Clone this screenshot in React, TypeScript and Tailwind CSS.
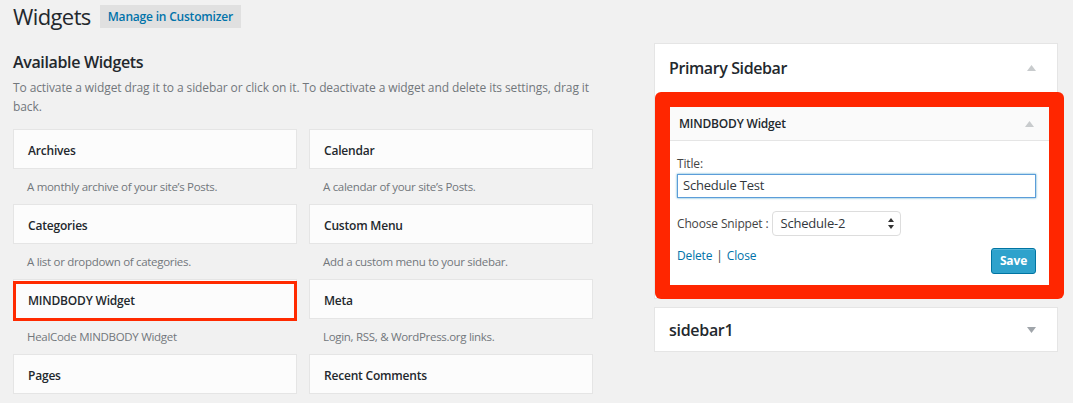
import React from "react";

const widgets = [
  { name: "Archives", desc: "A monthly archive of your site\u2019s Posts." },
  { name: "Calendar", desc: "A calendar of your site\u2019s Posts." },
  { name: "Categories", desc: "A list or dropdown of categories." },
  { name: "Custom Menu", desc: "Add a custom menu to your sidebar." },
  { name: "MINDBODY Widget", desc: "HealCode MINDBODY Widget", marked: true },
  { name: "Meta", desc: "Login, RSS, & WordPress.org links." },
  { name: "Pages", desc: "" },
  { name: "Recent Comments", desc: "" },
];

function Arrow({ down = false }: { down?: boolean }) {
  return (
    <svg width="9" height="6" viewBox="0 0 9 6" className="shrink-0">
      {down ? (
        <polygon points="0,0 9,0 4.5,6" fill="#a0a5aa" />
      ) : (
        <polygon points="0,6 9,6 4.5,0" fill="#c8cbcd" />
      )}
    </svg>
  );
}

function WidgetTile({ name, desc, marked }: { name: string; desc: string; marked?: boolean }) {
  return (
    <div className="h-[75px]">
      <div className="relative h-[40px] bg-[#fcfcfc] border border-[#e5e5e5] flex items-center px-[14px] pt-[3px]">
        <span className="text-[12px] tracking-[-0.2px] font-semibold text-[#23282d]">{name}</span>
        {marked && (
          <div className="absolute left-[-1px] right-[-1px] top-[1px] bottom-[-3px] border-[3px] border-[#ff2a00]" />
        )}
      </div>
      <p className="pl-[14px] pt-[9px] text-[11.5px] tracking-[-0.3px] text-[#72777c] leading-[18px]">{desc}</p>
    </div>
  );
}

export default function App() {
  return (
    <div
      className="w-[1073px] h-[403px] overflow-hidden bg-[#f1f1f1] pl-[13px]"
      style={{ fontFamily: '"Open Sans", "Liberation Sans", sans-serif' }}
    >
      <div className="flex items-center h-[32px] pt-[1px]">
        <h1 className="text-[22px] tracking-[-0.6px] text-[#23282d] leading-[29px] font-normal">Widgets</h1>
        <span className="ml-[9px] bg-[#e0e0e0] px-[8px] h-[23px] flex items-center text-[12px] tracking-[-0.2px] font-semibold text-[#0073aa]">
          Manage in Customizer
        </span>
      </div>

      <div className="flex">
        <div className="w-[580px]">
          <h2 className="mt-[19px] text-[16px] tracking-[-0.35px] font-semibold text-[#23282d] leading-[22px]">
            Available Widgets
          </h2>
          <p className="mt-[5px] text-[12px] tracking-[-0.1px] text-[#72777c] leading-[19px]">
            To activate a widget drag it to a sidebar or click on it. To deactivate a widget and delete its settings, drag it back.
          </p>
          <div className="mt-[13px] grid grid-cols-2 gap-x-[12px]">
            {widgets.map((w) => (
              <WidgetTile key={w.name} {...w} />
            ))}
          </div>
        </div>

        <div className="ml-[61px] w-[404px] pt-[11px]">
          <div className="bg-white border border-[#e5e5e5] h-[256px]">
            <div className="h-[48px] flex items-center justify-between pl-[14px] pr-[21px]">
              <span className="text-[16px] tracking-[-0.4px] font-semibold text-[#23282d]">Primary Sidebar</span>
              <Arrow />
            </div>
            <div className="w-[409px] bg-[#ff2600] rounded-[6px] p-[15px] pb-[14px]">
              <div className="bg-white">
                <div className="h-[34px] bg-[#fafafa] border-b border-[#e5e5e5] flex items-center justify-between pl-[9px] pr-[15px]">
                  <span className="text-[12px] tracking-[-0.2px] font-semibold text-[#23282d]">MINDBODY Widget</span>
                  <Arrow />
                </div>
                <div className="px-[7px] pt-[14px] pb-[11px] text-[12px] tracking-[-0.15px] text-[#444]">
                  <div className="leading-[18px]">Title:</div>
                  <div className="mt-[1px] w-[359px] h-[24px] border border-[#5b9dd9] shadow-[0_0_2px_rgba(30,140,190,0.8)] flex items-center px-[5px] text-[13px] tracking-[-0.2px] text-[#32373c]">
                    Schedule Test
                  </div>
                  <div className="mt-[13px] flex items-center">
                    <span>Choose Snippet :</span>
                    <div className="ml-[4px] w-[129px] h-[25px] border border-[#ddd] rounded-[4px] flex items-center justify-between pl-[7px] pr-[6px] text-[13px] tracking-[-0.2px] text-[#32373c]">
                      <span>Schedule-2</span>
                      <svg width="6" height="11" viewBox="0 0 6 11">
                        <polygon points="0,4 6,4 3,0" fill="#333" />
                        <polygon points="0,7 6,7 3,11" fill="#333" />
                      </svg>
                    </div>
                  </div>
                  <div className="mt-[11px] flex justify-between items-start">
                    <div className="leading-[18px]">
                      <span className="text-[#0073aa]">Delete</span>
                      <span className="text-[#444] mx-[4px]">|</span>
                      <span className="text-[#0073aa]">Close</span>
                    </div>
                    <button className="mt-[1px] mr-[6px] w-[45px] h-[26px] bg-[#2ea2cc] border border-[#0074a2] rounded-[3px] text-white text-[12px] font-bold shadow-[inset_0_1px_0_rgba(120,200,230,0.5)]">
                      Save
                    </button>
                  </div>
                </div>
              </div>
            </div>
          </div>
          <div className="mt-[8px] bg-white border border-[#e5e5e5] h-[45px] flex items-center justify-between pl-[14px] pr-[21px]">
            <span className="text-[16px] tracking-[-0.3px] font-semibold text-[#23282d]">sidebar1</span>
            <Arrow down />
          </div>
        </div>
      </div>
    </div>
  );
}
